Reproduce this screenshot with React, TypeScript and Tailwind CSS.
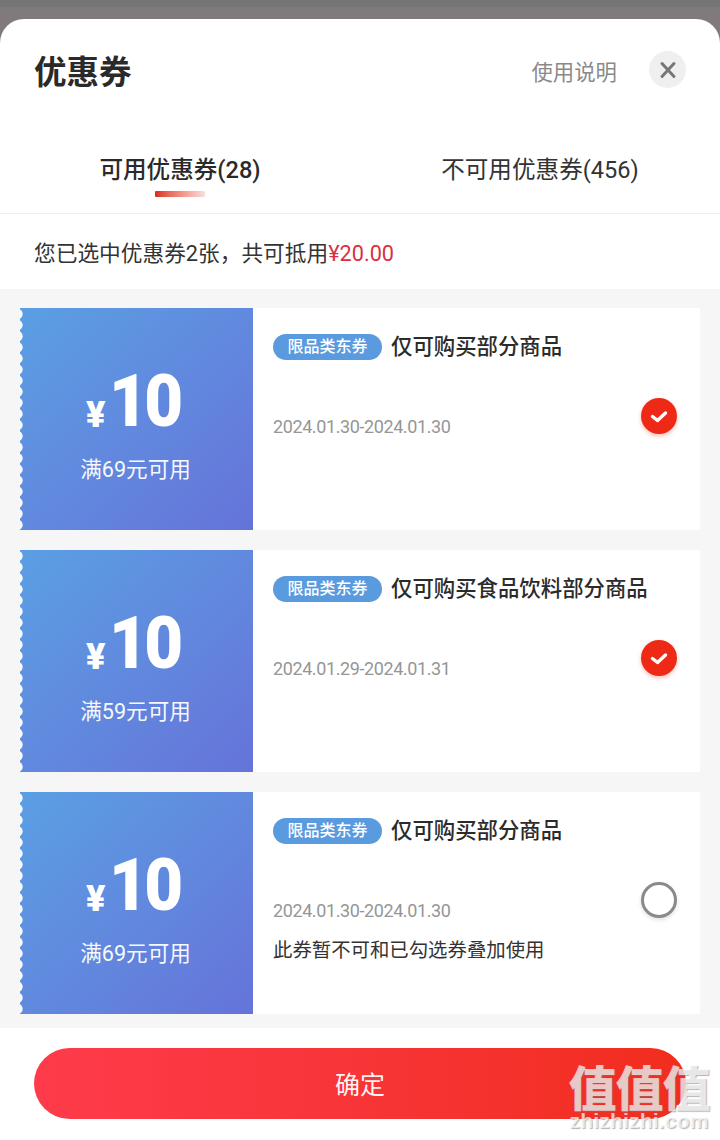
import React from "react";

const cjk = "font-['Roboto','Noto_Sans_CJK_SC',sans-serif]";

function Check({ on }: { on: boolean }) {
  if (!on)
    return <div className="w-[36px] h-[36px] rounded-full border-[3px] border-[#8a8a8a] bg-white shadow-[0_2px_4px_rgba(0,0,0,0.12)]" />;
  return (
    <div className="w-[36px] h-[36px] rounded-full bg-[#ee2a17] flex items-center justify-center shadow-[0_2px_4px_rgba(238,42,23,0.3)]">
      <svg width="22" height="22" viewBox="0 0 22 22" fill="none">
        <path d="M4.5 11.5 L9.5 15.5 L17.5 8" stroke="#fff" strokeWidth="3.4" strokeLinecap="round" strokeLinejoin="round" />
      </svg>
    </div>
  );
}

function Scallops() {
  const circles = [];
  for (let i = 0; i < 20; i++) circles.push(<circle key={i} cx="-2.5" cy={6 + i * 11.1} r="5.2" fill="#fafafc" />);
  return (
    <svg className="absolute left-0 top-0" width="6" height="222" viewBox="0 0 6 222">
      {circles}
    </svg>
  );
}

function Card({ min, title, date, on, note }: { min: string; title: string; date: string; on: boolean; note?: string }) {
  return (
    <div className="flex h-[222px] bg-white">
      <div className="relative w-[233px] shrink-0 bg-gradient-to-br from-[#5a9fe3] to-[#6573d9] flex flex-col items-center text-white">
        <Scallops />
        <div className="flex items-end h-[74px] mt-[55px] w-[100px] ml-[-1px]">
          <span className="text-[36px] font-black leading-[36px] mb-[4px] mr-[4px] font-['Roboto',sans-serif]">¥</span>
          <span className="inline-block origin-left scale-x-[0.92] text-[73px] font-black leading-[72px] tracking-[-4px] font-['Roboto',sans-serif]">10</span>
        </div>
        <div className="text-[21.6px] leading-[28px] mt-[19px] ml-[-2px] opacity-95">满{min}元可用</div>
      </div>
      <div className="relative flex-1 pl-[20px] pt-[24px]">
        <div className="flex items-center h-[30px]">
          <span className="h-[26px] w-[109px] rounded-full bg-[#5a9ade] text-white text-[16px] leading-[26px] text-center font-medium">限品类东券</span>
          <span className="ml-[9px] text-[21.4px] font-medium text-[#2b2b2b] leading-[30px]">{title}</span>
        </div>
        <div className="mt-[52px] text-[18px] leading-[26px] text-[#969696] tracking-[-0.4px]">{date}</div>
        {note && <div className="mt-[14px] text-[19.4px] leading-[26px] text-[#333]">{note}</div>}
        <div className="absolute right-[23px] top-[90px]">
          <Check on={on} />
        </div>
      </div>
    </div>
  );
}

export default function App() {
  return (
    <div className={`relative w-[720px] h-[1140px] overflow-hidden bg-[#807a7c] ${cjk}`}>
      <div className="h-[7px] bg-[#757575]" />
      <div className="mt-[12px] h-[1121px] bg-white rounded-t-[24px] flex flex-col overflow-hidden">
        <div className="h-[107px] shrink-0 flex items-center pl-[34px] pr-[34px] pb-[8px] pt-[8px]">
          <h1 className="text-[32.5px] font-bold text-[#2a2a2a] leading-[44px] flex-1">优惠券</h1>
          <span className="text-[21.4px] text-[#8a8a8a] leading-[30px]">使用说明</span>
          <div className="ml-[32px] mb-[6px] w-[37px] h-[37px] rounded-full bg-[#efefef] flex items-center justify-center">
            <svg width="18" height="18" viewBox="0 0 18 18" fill="none">
              <path d="M3 2.5 L15 15.5 M15 2.5 L3 15.5" stroke="#777" strokeWidth="3" strokeLinecap="round" />
            </svg>
          </div>
        </div>
        <div className="h-[88px] shrink-0 border-b border-[#eeeeee] flex">
          <div className="w-[360px] flex flex-col items-center pt-[27px]">
            <span className="text-[23.6px] font-medium text-[#2a2a2a] leading-[34px]">可用优惠券(28)</span>
            <span className="mt-[4px] w-[50px] h-[6px] rounded-[1px] bg-gradient-to-r from-[#d9281e] to-[#f7dedc]" />
          </div>
          <div className="w-[360px] flex flex-col items-center pt-[27px]">
            <span className="text-[23.6px] text-[#333] leading-[34px]">不可用优惠券(456)</span>
          </div>
        </div>
        <div className="h-[75px] shrink-0 flex items-center pl-[34px] pt-[5px] text-[21.7px] text-[#333]">
          您已选中优惠券2张，共可抵用<span className="text-[#d9303f]">¥20.00</span>
        </div>
        <div className="h-[739px] shrink-0 bg-[#f6f6f6] px-[20px] pt-[19px] flex flex-col gap-[20px] overflow-hidden">
          <Card min="69" title="仅可购买部分商品" date="2024.01.30-2024.01.30" on />
          <Card min="59" title="仅可购买食品饮料部分商品" date="2024.01.29-2024.01.31" on />
          <Card min="69" title="仅可购买部分商品" date="2024.01.30-2024.01.30" on={false} note="此券暂不可和已勾选券叠加使用" />
        </div>
        <div className="flex-1 bg-white px-[34px] pt-[20px]">
          <div className="h-[71px] rounded-full bg-gradient-to-r from-[#fe3b4a] to-[#f12d1c] flex items-center justify-center text-white/95 text-[25px] pt-[4px]">
            确定
          </div>
        </div>
      </div>
      <div className="absolute right-[8px] bottom-[8px] w-[146px] flex flex-col items-center text-white/70 [text-shadow:1px_1px_1px_rgba(120,120,120,0.55)]">
        <div className="text-[48px] h-[50px] leading-[50px] font-black tracking-[-1px] whitespace-nowrap font-['Noto_Sans_CJK_SC',sans-serif]">值值值</div>
        <div className="text-[21px] h-[22px] leading-[22px] font-bold tracking-[0.2px] font-['Liberation_Sans',sans-serif]">zhizhizhi.com</div>
      </div>
    </div>
  );
}
